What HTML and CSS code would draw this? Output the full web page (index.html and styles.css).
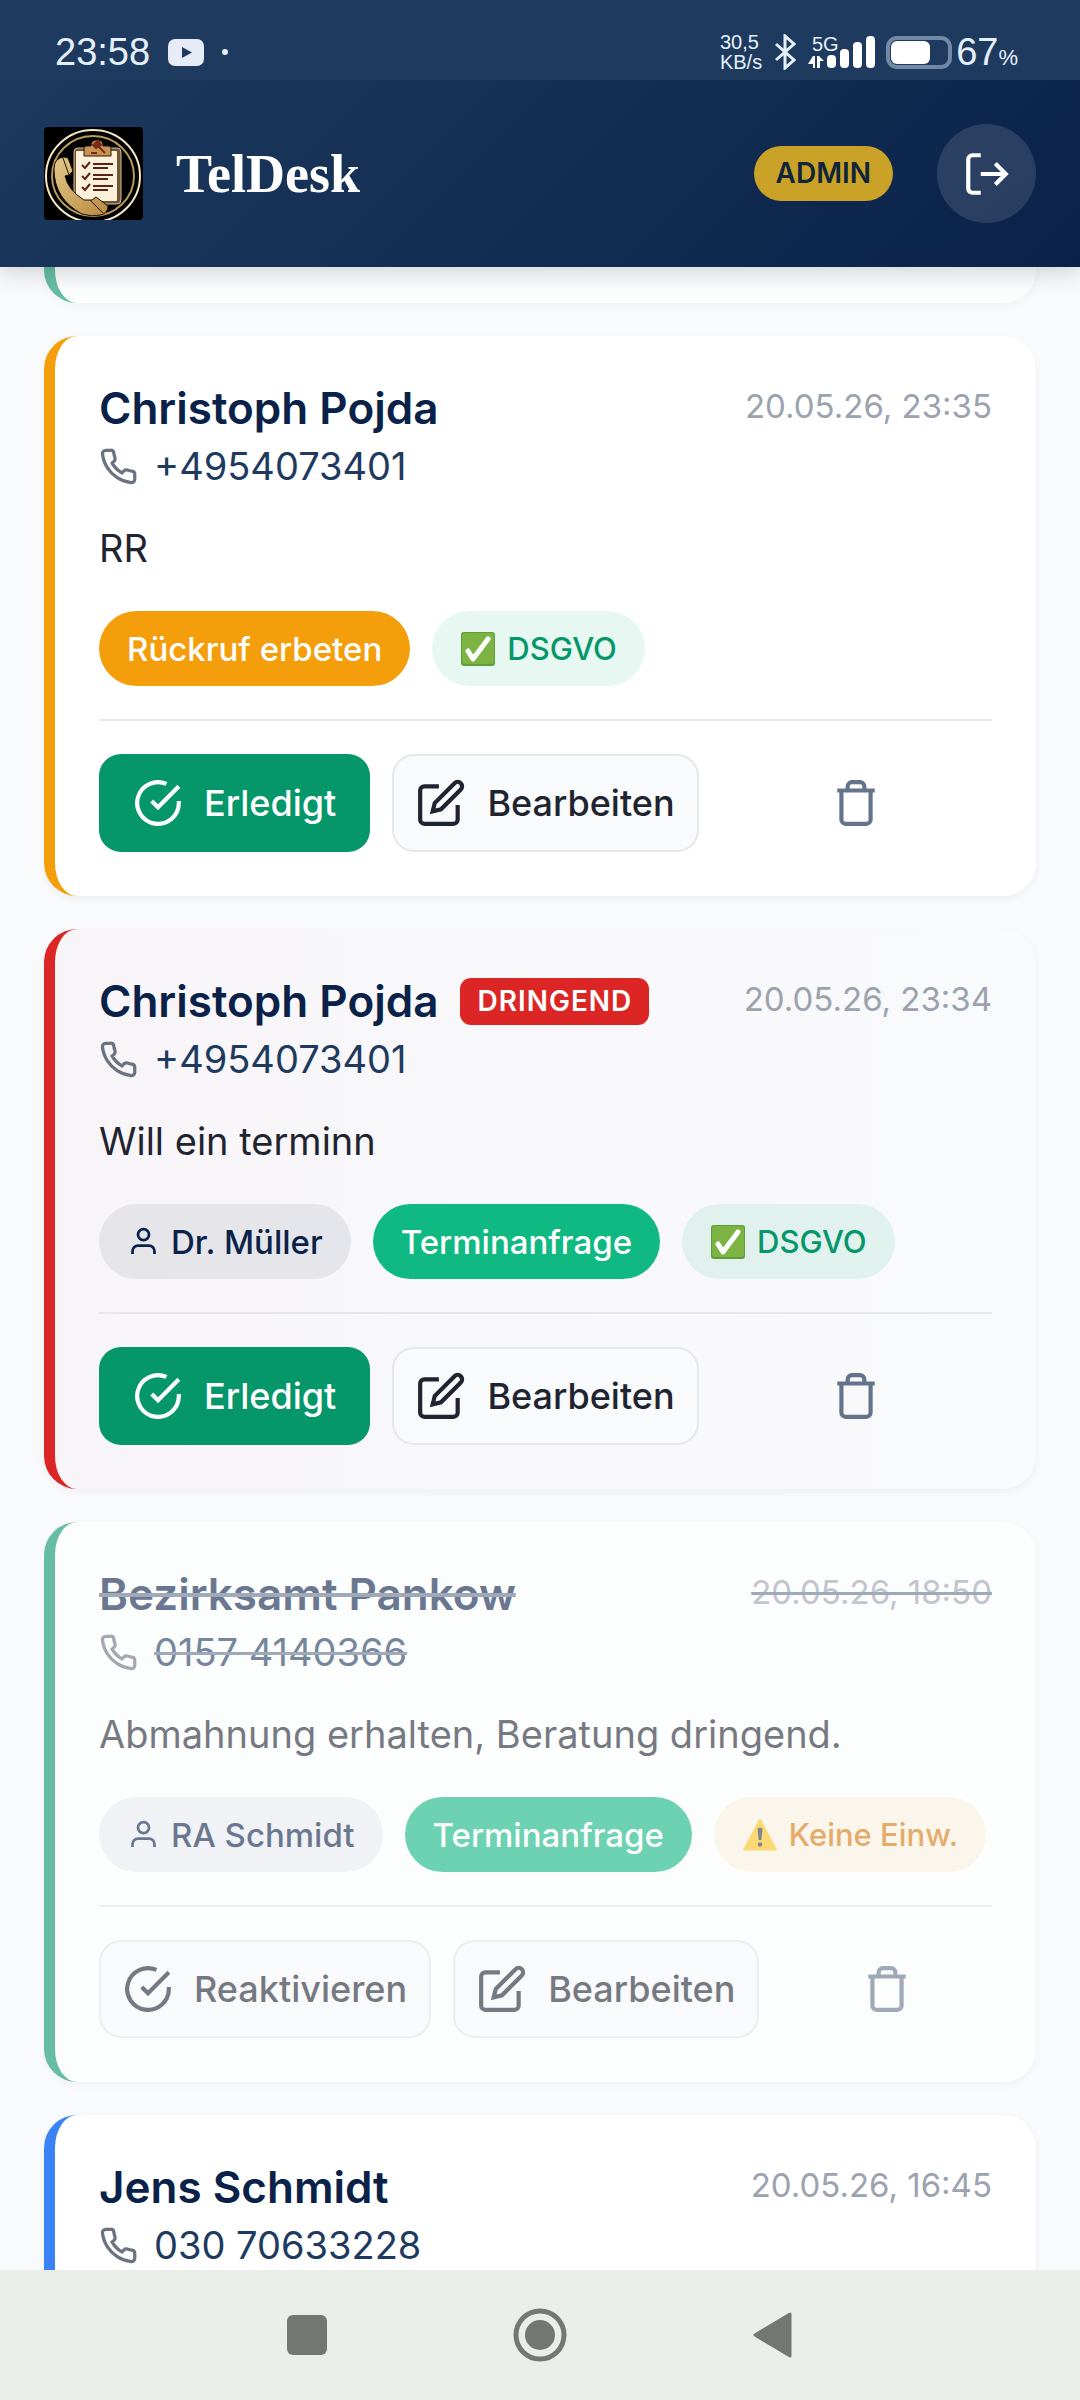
FILE: index.html
```
<!DOCTYPE html>
<html lang="de">
<head>
  <meta charset="UTF-8">
  <meta name="viewport" content="width=device-width, initial-scale=1.0">
  <title>TelDesk</title>
  <link rel="stylesheet" href="styles.css">
</head>
<body>

<!-- Icons -->
<svg class="sprite" aria-hidden="true">
  <symbol id="i-phone" viewBox="0 0 24 24">
    <path d="M22 16.92v3a2 2 0 0 1-2.18 2 19.79 19.79 0 0 1-8.63-3.07 19.5 19.5 0 0 1-6-6 19.79 19.79 0 0 1-3.07-8.67A2 2 0 0 1 4.11 2h3a2 2 0 0 1 2 1.72 12.84 12.84 0 0 0 .7 2.81 2 2 0 0 1-.45 2.11L8.09 9.91a16 16 0 0 0 6 6l1.27-1.27a2 2 0 0 1 2.11-.45 12.84 12.84 0 0 0 2.81.7A2 2 0 0 1 22 16.92z"/>
  </symbol>
  <symbol id="i-check" viewBox="0 0 24 24">
    <path d="M22 11.08V12a10 10 0 1 1-5.93-9.14"/>
    <path d="M22 4 12 14.01l-3-3"/>
  </symbol>
  <symbol id="i-edit" viewBox="0 0 24 24">
    <path d="M11 4H4a2 2 0 0 0-2 2v14a2 2 0 0 0 2 2h14a2 2 0 0 0 2-2v-7"/>
    <path d="M18.500 2.500a2.121 2.121 0 0 1 3 3L12 15l-4 1 1-4 9.500-9.500z"/>
  </symbol>
  <symbol id="i-trash" viewBox="0 0 24 24">
    <path d="M3 6h18"/>
    <path d="M19 6v14a2 2 0 0 1-2 2H7a2 2 0 0 1-2-2V6m3 0V4a2 2 0 0 1 2-2h4a2 2 0 0 1 2 2v2"/>
  </symbol>
  <symbol id="i-user" viewBox="0 0 24 24">
    <path d="M20 21v-2a4 4 0 0 0-4-4H8a4 4 0 0 0-4 4v2"/>
    <circle cx="12" cy="7" r="4"/>
  </symbol>
  <symbol id="i-ok" viewBox="0 0 34 34">
    <rect x="0" y="0" width="34" height="34" rx="3" fill="#5f9e3a"/>
    <rect x="1" y="1" width="32" height="31" rx="3" fill="#7cb342"/>
    <path d="M7 19l5 8L27 7" fill="none" stroke="#fff" stroke-width="5" stroke-linecap="round" stroke-linejoin="round"/>
  </symbol>
  <symbol id="i-warn" viewBox="0 0 34 34">
    <path d="M17 3 32 31H2z" fill="#fcc21b" stroke="#fcc21b" stroke-width="3" stroke-linejoin="round"/>
    <path d="M14.500 11q2.500-3 5 0l-1.200 11h-2.600z" fill="#2f3a44"/>
    <circle cx="17" cy="26.500" r="2.200" fill="#2f3a44"/>
  </symbol>
</svg>

<div class="app">

  <header class="header">
    <div class="statusbar">
      <div class="status-left">
        <span class="clock">23:58</span>
        <svg width="36" height="27" viewBox="0 0 36 27"><rect width="36" height="27" rx="7" fill="#e6ebf5"/><path d="M14 8l10 5.500-10 5.500z" fill="#1e3a5f"/></svg>
        <span class="dot"></span>
      </div>
      <div class="status-right">
        <div class="speed">30,5<br>KB/s</div>
        <svg class="bt" width="22" height="36" viewBox="0 0 22 36"><path d="M2 10l18 16-9 8V2l9 8L2 26" fill="none" stroke="#e6f0fb" stroke-width="3"/></svg>
        <svg class="signal" width="70" height="40" viewBox="0 0 70 40">
          <text class="net" x="4" y="19">5G</text>
          <g fill="#fff">
            <rect x="19" y="23" width="9" height="13" rx="4"/>
            <rect x="32" y="17" width="9" height="19" rx="4"/>
            <rect x="45" y="10" width="9" height="26" rx="4"/>
            <rect x="58" y="4" width="9" height="32" rx="4"/>
            <path d="M5 24h2v12H5v-4H0z"/>
            <path d="M9 24h2l5 5h-4v7H9z"/>
          </g>
        </svg>
        <svg width="66" height="33" viewBox="0 0 66 33">
          <rect x="2" y="2" width="62" height="29" rx="9" fill="none" stroke="#7189a4" stroke-width="4"/>
          <rect x="5" y="5" width="39" height="23" rx="6" fill="#fff"/>
        </svg>
        <span class="percent">67<small>%</small></span>
      </div>
    </div>

    <div class="topbar">
      <div class="brand">
        <svg class="logo" viewBox="0 0 99 93" role="img" aria-label="TelDesk Logo">
          <defs>
            <linearGradient id="gold" x1="0" y1="0" x2="1" y2="1">
              <stop offset="0" stop-color="#e3c98a"/>
              <stop offset="1" stop-color="#b98a3e"/>
            </linearGradient>
          </defs>
          <rect width="99" height="93" rx="4" fill="#000"/>
          <ellipse cx="49" cy="49" rx="47" ry="46" fill="none" stroke="#f2e6c4" stroke-width="2"/>
          <ellipse cx="49" cy="49" rx="41" ry="40" fill="none" stroke="#b79a5c" stroke-width="2"/>
          <rect x="30" y="21" width="47" height="56" rx="4" fill="#6e5636" stroke="#d9bf8c" stroke-width="1"/>
          <rect x="32" y="24" width="41" height="50" rx="1" fill="#fdf1dc"/>
          <path d="M40 29v-8q0-2 3-2h4q0-6 6-6t6 6h5q3 0 3 2v8z" fill="#c99255" stroke="#2b1a0c" stroke-width="1"/>
          <path d="M49 18l5-4 3 4-5 3zM54 19l7 7M47 26h6" fill="#7a2b16" stroke="#7a2b16" stroke-width="2"/>
          <path d="M38 38l3 3 5-6M38 49l3 3 5-6M38 60l3 3 5-6M49 37h20M49 41h15M49 48h20M49 52h15M49 59h20M49 63h15" fill="none" stroke="#5a2414" stroke-width="2"/>
          <path d="M10 42Q10 31 20 30l4 1 5 13-4 4-4 1q3 14 19 24l8 0 4-3 12 9q0 7-7 9-10 2-19-1Q10 72 10 42z" fill="url(#gold)" stroke="#1a1208" stroke-width="1"/>
          <path d="M19 31l6 17M46 73l13 13" stroke="#1a1208" stroke-width="1"/>
        </svg>
        <h1 class="title">TelDesk</h1>
      </div>
      <div class="session">
        <span class="role">ADMIN</span>
        <button class="logout" aria-label="Abmelden">
          <svg class="icon" viewBox="0 0 24 24"><path d="M9 21H5a2 2 0 0 1-2-2V5a2 2 0 0 1 2-2h4M16 17l5-5-5-5M21 12H9"/></svg>
        </button>
      </div>
    </div>
  </header>

  <main class="calls">
    <article class="card done cut"></article>

    <article class="card callback">
      <div class="card-head">
        <div class="who">
          <h2 class="name">Christoph Pojda</h2>
        </div>
        <time class="date">20.05.26, 23:35</time>
      </div>
      <div class="phone">
        <svg class="icon"><use href="#i-phone"/></svg>
        <a href="tel:+4954073401">+4954073401</a>
      </div>
      <p class="message">RR</p>
      <div class="tags">
        <span class="tag tag-callback">Rückruf erbeten</span>
        <span class="tag tag-small tag-ok"><svg class="emoji"><use href="#i-ok"/></svg>DSGVO</span>
      </div>
      <div class="actions">
        <button class="btn btn-done"><svg class="icon"><use href="#i-check"/></svg>Erledigt</button>
        <button class="btn btn-plain"><svg class="icon"><use href="#i-edit"/></svg>Bearbeiten</button>
        <button class="btn btn-trash" aria-label="Löschen"><svg class="icon"><use href="#i-trash"/></svg></button>
      </div>
    </article>

    <article class="card urgent">
      <div class="card-head">
        <div class="who">
          <h2 class="name">Christoph Pojda</h2>
          <span class="flag">DRINGEND</span>
        </div>
        <time class="date">20.05.26, 23:34</time>
      </div>
      <div class="phone">
        <svg class="icon"><use href="#i-phone"/></svg>
        <a href="tel:+4954073401">+4954073401</a>
      </div>
      <p class="message">Will ein terminn</p>
      <div class="tags">
        <span class="tag tag-person"><svg class="icon"><use href="#i-user"/></svg>Dr. Müller</span>
        <span class="tag tag-date">Terminanfrage</span>
        <span class="tag tag-small tag-ok"><svg class="emoji"><use href="#i-ok"/></svg>DSGVO</span>
      </div>
      <div class="actions">
        <button class="btn btn-done"><svg class="icon"><use href="#i-check"/></svg>Erledigt</button>
        <button class="btn btn-plain"><svg class="icon"><use href="#i-edit"/></svg>Bearbeiten</button>
        <button class="btn btn-trash" aria-label="Löschen"><svg class="icon"><use href="#i-trash"/></svg></button>
      </div>
    </article>

    <article class="card done">
      <div class="card-head">
        <div class="who">
          <h2 class="name">Bezirksamt Pankow</h2>
        </div>
        <time class="date">20.05.26, 18:50</time>
      </div>
      <div class="phone">
        <svg class="icon"><use href="#i-phone"/></svg>
        <a href="tel:01574140366">0157 4140366</a>
      </div>
      <p class="message">Abmahnung erhalten, Beratung dringend.</p>
      <div class="tags">
        <span class="tag tag-person"><svg class="icon"><use href="#i-user"/></svg>RA Schmidt</span>
        <span class="tag tag-date">Terminanfrage</span>
        <span class="tag tag-small tag-warn"><svg class="emoji"><use href="#i-warn"/></svg>Keine Einw.</span>
      </div>
      <div class="actions">
        <button class="btn btn-plain"><svg class="icon"><use href="#i-check"/></svg>Reaktivieren</button>
        <button class="btn btn-plain"><svg class="icon"><use href="#i-edit"/></svg>Bearbeiten</button>
        <button class="btn btn-trash" aria-label="Löschen"><svg class="icon"><use href="#i-trash"/></svg></button>
      </div>
    </article>

    <article class="card open">
      <div class="card-head">
        <div class="who">
          <h2 class="name">Jens Schmidt</h2>
        </div>
        <time class="date">20.05.26, 16:45</time>
      </div>
      <div class="phone">
        <svg class="icon"><use href="#i-phone"/></svg>
        <a href="tel:03070633228">030 70633228</a>
      </div>
    </article>
  </main>

  <nav class="sysnav">
    <button aria-label="Übersicht"><svg viewBox="0 0 56 56"><rect x="8" y="8" width="40" height="40" rx="6"/></svg></button>
    <button aria-label="Start"><svg viewBox="0 0 56 56"><circle cx="28" cy="28" r="24" fill="none" stroke="#737672" stroke-width="5"/><circle cx="28" cy="28" r="15"/></svg></button>
    <button aria-label="Zurück"><svg viewBox="0 0 56 56"><path d="M45 7v42L10 28z" stroke="#737672" stroke-width="3" stroke-linejoin="round"/></svg></button>
  </nav>

</div>
</body>
</html>
```
FILE: styles.css
```
* {
  box-sizing: border-box;
}
body {
  margin: 0;
  font-family: Inter, sans-serif;
  font-optical-sizing: none;
  background-color: #f9fafc;
  color: #1f2430;
}
h1, h2, p {
  margin: 0;
}
button {
  font-family: inherit;
  border: none;
  padding: 0;
  cursor: pointer;
}
.sprite {
  display: none;
}
.icon {
  flex: none;
  fill: none;
  stroke: currentColor;
  stroke-width: 2;
}
.app {
  display: flex;
  flex-direction: column;
  height: 100vh;
}

/* Header */
.header {
  position: relative;
  z-index: 1;
  flex: none;
  background: linear-gradient(135deg, #1e3a5f 0%, #0a2249 100%);
  box-shadow: 0 4px 24px rgba(10, 34, 40, 0.2);
  color: #fff;
}
.statusbar {
  display: flex;
  justify-content: space-between;
  align-items: center;
  height: 80px;
  padding: 24px 62px 0 55px;
  background-color: #1e3a5f;
  font-family: "Liberation Sans", sans-serif;
  color: #e6f0fb;
}
.status-left, .status-right {
  display: flex;
  align-items: center;
}
.status-left {
  gap: 18px;
}
.clock, .percent {
  font-size: 38px;
}
.percent small {
  font-size: 22px;
}
.dot {
  width: 6px;
  height: 6px;
  border-radius: 50%;
  background-color: #e6f0fb;
}
.status-right {
  gap: 8px;
}
.speed {
  font-size: 20px;
  line-height: 20px;
}
.bt {
  margin: 0 4px;
}
.signal {
  overflow: visible;
}
.net {
  font-size: 20px;
  fill: #e6f0fb;
}
.percent {
  margin-left: -4px;
}
.topbar {
  display: flex;
  justify-content: space-between;
  align-items: center;
  padding: 44px;
}
.brand, .session {
  display: flex;
  align-items: center;
}
.brand {
  gap: 33px;
}
.logo {
  width: 99px;
  height: 93px;
}
.title {
  font-family: "Liberation Serif", serif;
  font-size: 54px;
  line-height: 60px;
  font-weight: 700;
}
.session {
  gap: 44px;
}
.role {
  padding: 0 22px;
  border-radius: 28px;
  background-color: #c9a227;
  color: #10253a;
  font-size: 28px;
  line-height: 55px;
  font-weight: 600;
}
.logout {
  display: flex;
  align-items: center;
  justify-content: center;
  width: 99px;
  height: 99px;
  border-radius: 50%;
  background-color: rgba(255, 255, 255, 0.12);
  color: #fff;
}
.logout .icon {
  width: 50px;
  height: 50px;
}

/* Call list */
.calls {
  flex: 1;
  min-height: 0;
  overflow: hidden;
  display: flex;
  flex-direction: column;
  gap: 33px;
  padding: 0 44px;
}
.card {
  flex: none;
  padding: 44px;
  border-left: 11px solid #3b82f6;
  border-radius: 33px;
  background-color: #fff;
  box-shadow: 0 3px 8px rgba(10, 34, 73, 0.05);
}
.card.callback {
  border-left-color: #f59e0b;
}
.card.urgent {
  border-left-color: #dc2626;
  background: linear-gradient(90deg, rgba(180, 38, 38, 0.025), transparent);
}
.card.done {
  border-left-color: #059669;
  opacity: 0.6;
}
.card.cut {
  height: 36px;
  padding: 0;
  border-top-left-radius: 0;
  border-top-right-radius: 0;
}
.card-head {
  display: flex;
  justify-content: space-between;
  align-items: flex-start;
}
.who {
  display: flex;
  align-items: center;
  gap: 22px;
}
.name {
  font-size: 44px;
  line-height: 56px;
  font-weight: 600;
  color: #0a2249;
}
.flag {
  padding: 0 17px;
  border-radius: 11px;
  background-color: #dc2626;
  color: #fff;
  font-size: 28px;
  line-height: 47px;
  font-weight: 600;
  letter-spacing: 1px;
}
.date {
  font-size: 33px;
  line-height: 52px;
  color: #9ca3af;
}
.phone {
  display: flex;
  align-items: center;
  gap: 16px;
  font-size: 38px;
  line-height: 60px;
  color: #6b7280;
}
.phone .icon {
  width: 39px;
  height: 39px;
}
.phone a {
  color: #1e3a5f;
  text-decoration: none;
}
.message {
  margin-top: 22px;
  font-size: 38px;
  line-height: 60px;
}
.done .name, .done .date, .done .phone a {
  text-decoration: line-through;
  text-decoration-color: #64748b;
}

/* Tags */
.tags {
  display: flex;
  gap: 22px;
  margin-top: 33px;
}
.tag {
  display: flex;
  align-items: center;
  gap: 11px;
  height: 75px;
  padding: 0 28px;
  border-radius: 38px;
  font-size: 33px;
  font-weight: 500;
  color: #fff;
  white-space: nowrap;
}
.tag .icon {
  width: 33px;
  height: 33px;
}
.tag-small {
  font-size: 31px;
}
.emoji {
  width: 36px;
  height: 34px;
}
.tag-callback {
  background-color: #f59e0b;
}
.tag-date {
  background-color: #10b981;
}
.tag-person {
  background-color: rgba(10, 34, 73, 0.08);
  color: #0a2249;
}
.tag-ok {
  background-color: rgba(16, 185, 129, 0.1);
  color: #059669;
}
.tag-warn {
  background-color: rgba(225, 165, 8, 0.12);
  color: #d97706;
}

/* Actions */
.actions {
  display: flex;
  gap: 22px;
  margin-top: 33px;
  padding-top: 33px;
  border-top: 2px solid #e5e7eb;
}
.btn {
  flex: 1 1 0;
  display: flex;
  align-items: center;
  justify-content: center;
  gap: 21px;
  height: 98px;
  padding: 0 22px;
  border-radius: 22px;
  font-size: 36px;
  font-weight: 500;
}
.btn .icon {
  width: 50px;
  height: 50px;
}
.btn-done {
  background-color: #059669;
  color: #fff;
}
.btn-plain {
  border: 2px solid #e5e7eb;
  background-color: #f9fafc;
  color: #1f2430;
}
.btn-trash {
  background-color: transparent;
  color: #64748b;
}

/* System navigation */
.sysnav {
  flex: none;
  display: flex;
  align-items: center;
  justify-content: center;
  gap: 177px;
  height: 130px;
  background-color: #e9eee8;
}
.sysnav button {
  background: none;
}
.sysnav svg {
  display: block;
  width: 56px;
  height: 56px;
  fill: #737672;
}
```
